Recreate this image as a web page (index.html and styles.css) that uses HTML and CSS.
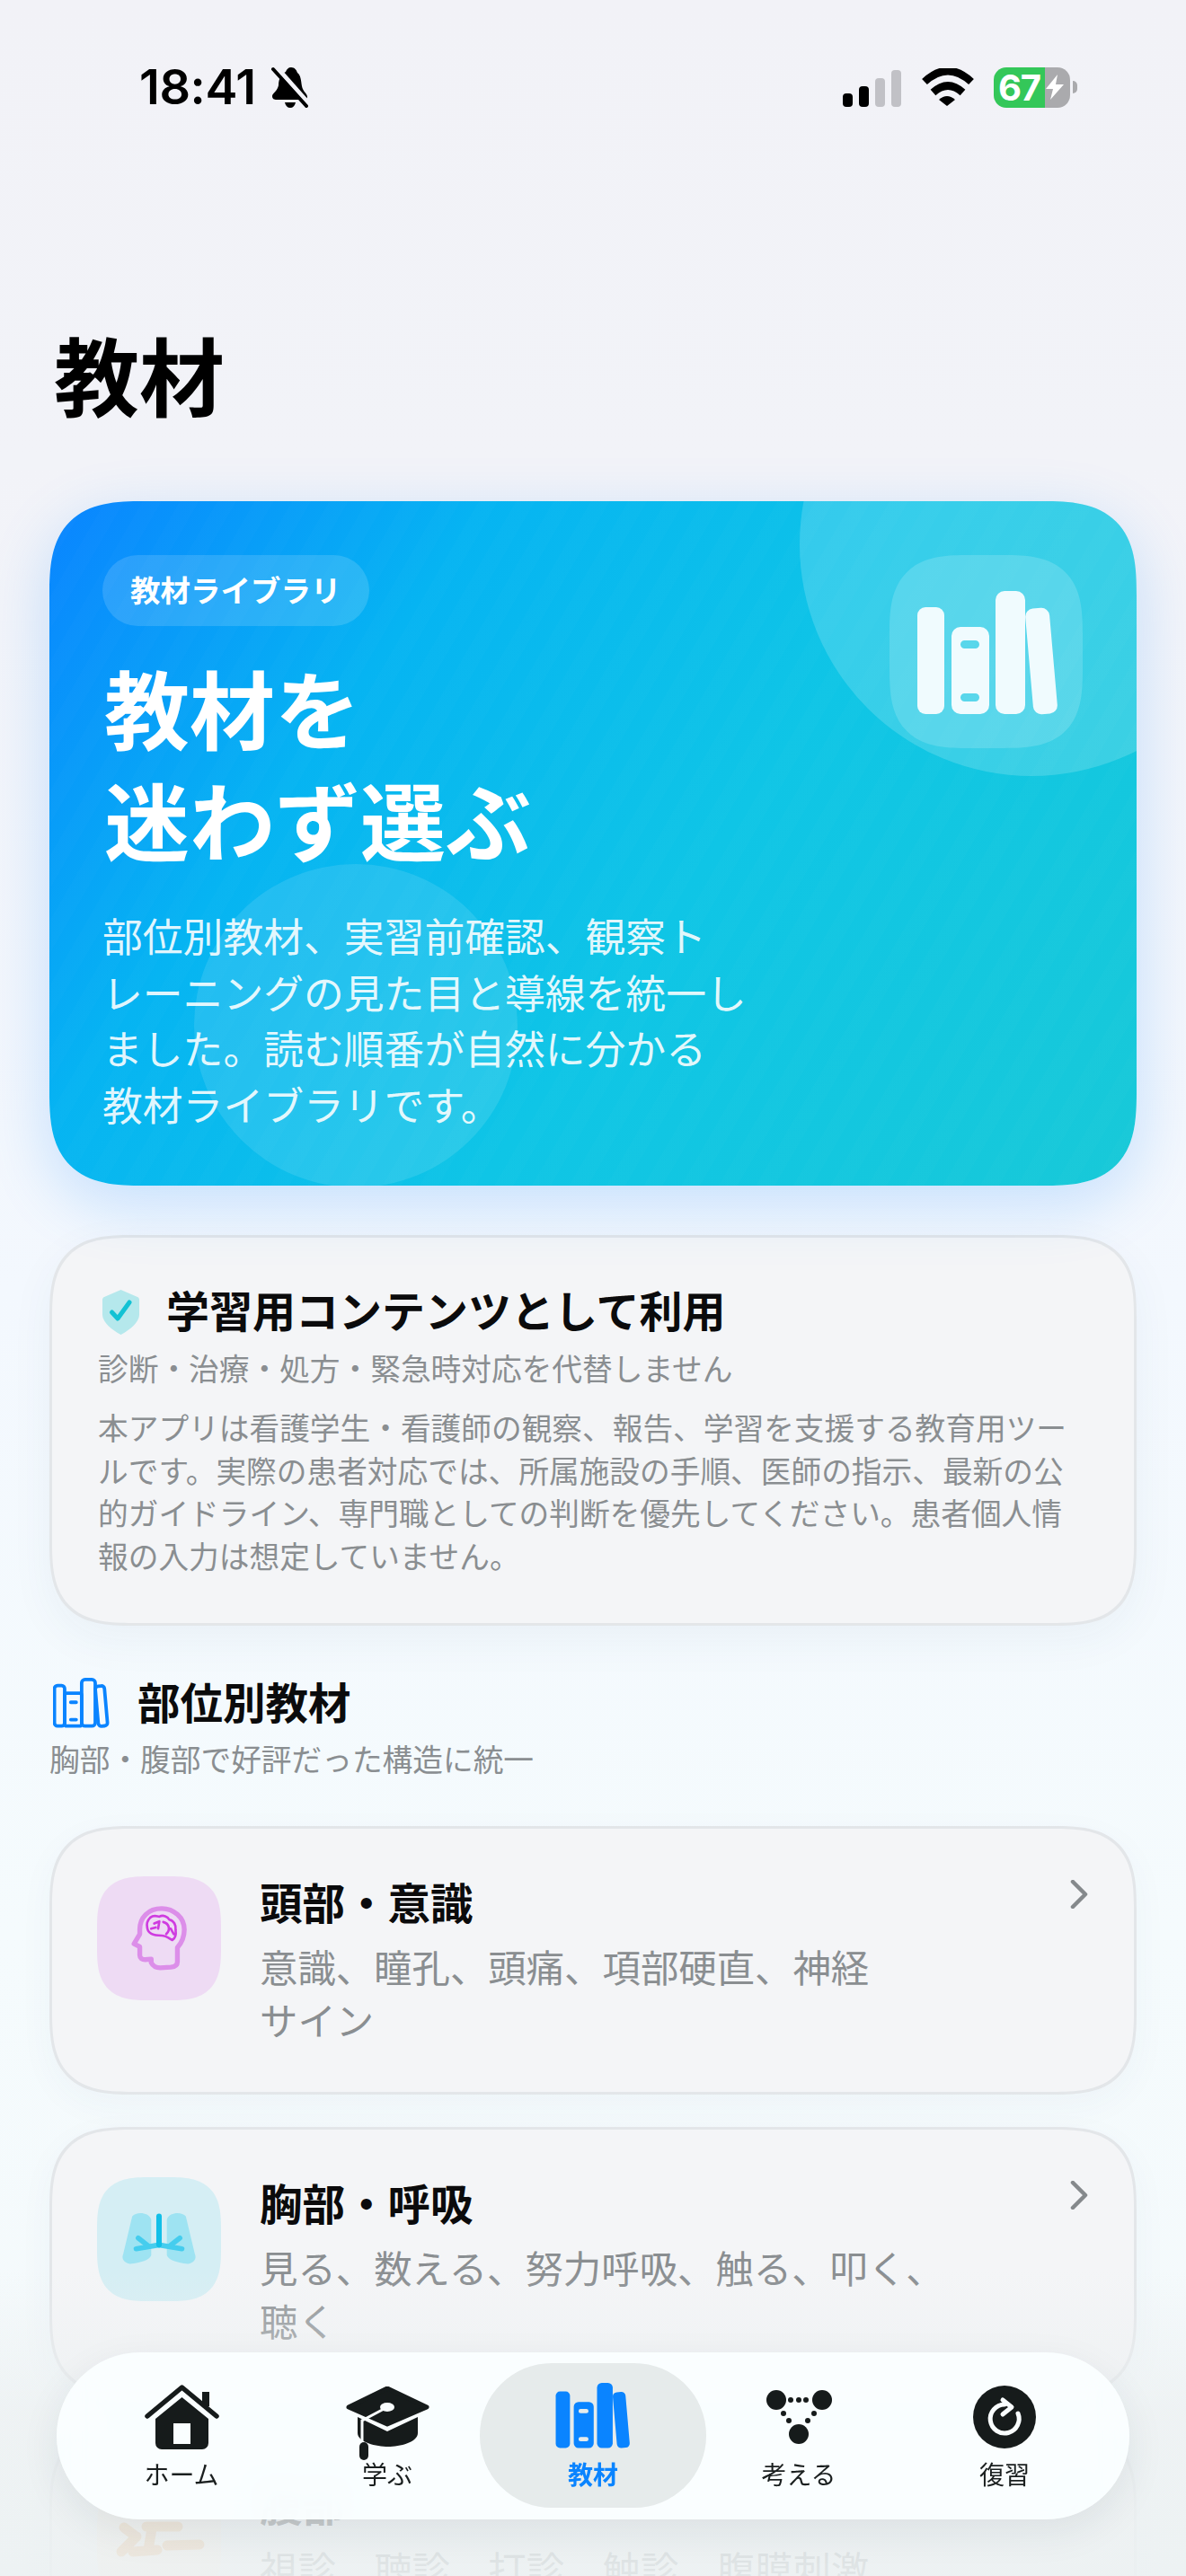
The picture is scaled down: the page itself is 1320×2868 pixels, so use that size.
FILE: index.html
```html
<!DOCTYPE html>
<html lang="ja">
<head>
<meta charset="utf-8">
<title>教材</title>
<link rel="stylesheet" href="styles.css">
</head>
<body>
<svg class="defs" width="0" height="0" aria-hidden="true">
  <symbol id="books" viewBox="29 38 159 140">
    <rect x="30" y="57" width="30" height="119" rx="9"/>
    <path fill-rule="evenodd" d="M78 79H100a10 10 0 0 1 10 10V166a10 10 0 0 1 -10 10H78a10 10 0 0 1 -10 -10V89a10 10 0 0 1 10 -10ZM82.500 94a4.500 4.500 0 0 0 0 9H94.500a4.500 4.500 0 0 0 0 -9ZM82.500 153a4.500 4.500 0 0 0 0 9H94.500a4.500 4.500 0 0 0 0 -9Z"/>
    <rect x="117" y="39" width="33" height="137" rx="10"/>
    <rect x="154.500" y="58" width="27" height="118" rx="9" transform="rotate(-5 168 117)"/>
  </symbol>
</svg>
<div class="screen">
  <header class="status">
    <div class="status-left">
      <span class="time">18:41</span>
      <svg class="bell" viewBox="0 0 41 46">
        <path d="M22 1C26 1 28 4 29 7C33 10 33 16 34 22C35 28 40 30 40 34C40 36 38 37 36 37H6C3 37 1 36 1 33C1 30 7 27 8 21C8 14 11 8 16 6C17 3 19 1 22 1Z"/>
        <path d="M15 40H27C26 44 24 46 21 46C18 46 16 44 15 40Z"/>
        <path class="bell-gap" d="M6 1L44 44"/>
        <path class="bell-slash" d="M2 3L39 44"/>
      </svg>
    </div>
    <div class="status-right">
      <svg class="signal" viewBox="0 0 65 41">
        <rect x="0" y="26" width="11" height="15" rx="4"/>
        <rect x="18" y="18" width="11" height="23" rx="4"/>
        <rect class="signal-off" x="36" y="9" width="11" height="32" rx="4"/>
        <rect class="signal-off" x="54" y="0" width="11" height="41" rx="4"/>
      </svg>
      <svg class="wifi" viewBox="0 0 58 42">
        <path class="wifi-arc" d="M3 15Q29 -9 55 15"/>
        <path class="wifi-arc" d="M12.500 27Q29 12 45.500 27"/>
        <path d="M19 35Q28 27 37 35L28 42Z"/>
      </svg>
      <div class="battery">
        <span class="battery-level">67</span>
        <span class="battery-rest">
          <svg class="bolt" viewBox="0 0 20 28"><path d="M13 0L0 16H8L5 28L20 11H11Z"/></svg>
        </span>
      </div>
      <span class="battery-nub"></span>
    </div>
  </header>

  <main class="content">
    <h1 class="page-title">教材</h1>

    <section class="hero">
      <span class="hero-circle hero-circle-top"></span>
      <span class="hero-circle hero-circle-bottom"></span>
      <div class="hero-text">
        <span class="hero-pill">教材ライブラリ</span>
        <h2 class="hero-title">教材を<br>迷わず選ぶ</h2>
        <p class="hero-desc">部位別教材、実習前確認、観察ト<br>レーニングの見た目と導線を統一し<br>ました。読む順番が自然に分かる<br>教材ライブラリです。</p>
      </div>
      <div class="hero-tile">
        <svg class="hero-books"><use href="#books"/></svg>
      </div>
    </section>

    <section class="notice">
      <div class="notice-head">
        <svg class="shield" viewBox="0 0 41 50">
          <path class="shield-body" d="M20.500 0L39 8C40.500 8.700 41 10 41 11V28C41 36 30 45 20.500 50C11 45 0 36 0 28V11C0 10 .5 8.700 2 8Z"/>
          <path class="shield-check" d="M10.500 25L17 32L30 14"/>
        </svg>
        <h3 class="notice-title">学習用コンテンツとして利用</h3>
      </div>
      <p class="notice-sub">診断・治療・処方・緊急時対応を代替しません</p>
      <p class="notice-body">本アプリは看護学生・看護師の観察、報告、学習を支援する教育用ツー<br>ルです。実際の患者対応では、所属施設の手順、医師の指示、最新の公<br>的ガイドライン、専門職としての判断を優先してください。患者個人情<br>報の入力は想定していません。</p>
    </section>

    <section class="section-head">
      <div class="section-row">
        <svg class="section-icon" viewBox="26 34 166 148">
          <rect x="30" y="57" width="30" height="119" rx="9"/>
          <rect x="60" y="79" width="50" height="97" rx="6"/>
          <path d="M78 106H94M78 157H94"/>
          <rect x="110" y="39" width="40" height="137" rx="10"/>
          <rect x="154.500" y="58" width="27" height="118" rx="9" transform="rotate(-5 168 117)"/>
        </svg>
        <h3 class="section-title">部位別教材</h3>
      </div>
      <p class="section-sub">胸部・腹部で好評だった構造に統一</p>
    </section>

    <article class="card">
      <div class="card-tile tile-purple">
        <svg class="card-icon" viewBox="55 88 412 412">
          <path class="head" d="M322 372V325C340 305 345 285 345 265C345 225 310 195 270 195C225 195 197 225 197 265V280L178 312L197 322V350C197 360 205 365 215 365L235 363V375C240 385 250 392 265 392L300 390C315 388 322 382 322 372Z"/>
          <path class="brain" d="M232 225C245 215 255 222 262 222C275 215 290 222 295 232C310 235 318 250 316 265C318 280 315 295 305 300C295 295 285 285 270 285C250 285 225 280 222 260C218 245 225 232 232 225ZM245 245L262 238L258 262M275 240C295 245 300 265 285 280M300 262L310 280M235 262L250 258"/>
        </svg>
      </div>
      <div class="card-body">
        <h4 class="card-title">頭部・意識</h4>
        <p class="card-desc">意識、瞳孔、頭痛、項部硬直、神経<br>サイン</p>
      </div>
      <svg class="chevron" viewBox="0 0 20 32"><path d="M3 2L17 16L3 30"/></svg>
    </article>

    <article class="card">
      <div class="card-tile tile-cyan">
        <svg class="card-icon" viewBox="55 70 412 412">
          <path class="lung" d="M172 200C185 185 225 185 235 210V330C230 345 200 355 165 358C145 355 135 340 142 325Z"/>
          <path class="lung" d="M350 200C337 185 297 185 287 210V330C292 345 322 355 357 358C377 355 387 340 380 325Z"/>
          <path class="bronchi" d="M192 272L225 298M330 272L297 298M185 308L261 295L337 308"/>
          <path class="trachea" d="M261 200V295"/>
        </svg>
      </div>
      <div class="card-body">
        <h4 class="card-title">胸部・呼吸</h4>
        <p class="card-desc">見る、数える、努力呼吸、触る、叩く、<br>聴く</p>
      </div>
      <svg class="chevron" viewBox="0 0 20 32"><path d="M3 2L17 16L3 30"/></svg>
    </article>

    <article class="card">
      <div class="card-tile tile-orange">
        <svg class="card-icon" viewBox="0 0 138 138">
          <path class="gut" d="M30 55L42 64M27 82L44 65M55 54H90M61 56L57 80M40 82L67 80M78 75L114 74"/>
        </svg>
      </div>
      <div class="card-body">
        <h4 class="card-title">腹部</h4>
        <p class="card-desc">視診、聴診、打診、触診、腹膜刺激</p>
      </div>
      <svg class="chevron" viewBox="0 0 20 32"><path d="M3 2L17 16L3 30"/></svg>
    </article>
  </main>

  <div class="fade"></div>

  <nav class="tabbar">
    <a class="tab">
      <svg class="tab-icon icon-home" viewBox="0 0 83 72">
        <path class="home-body" fill-rule="evenodd" d="M41.500 14L71 38V65a7 7 0 0 1 -7 7H19a7 7 0 0 1 -7 -7V38ZM32 43V66H51V43Z"/>
        <path class="home-roof" d="M3 35L41.500 3L80 35"/>
        <path class="home-chimney" d="M68 8V24"/>
      </svg>
      <span class="tab-label">ホーム</span>
    </a>
    <a class="tab">
      <svg class="tab-icon icon-cap" viewBox="0 0 93 82">
        <path class="cap-bowl" d="M13 34L46 50L80 34V52C80 62 60 67 47 67C34 67 13 62 13 52Z"/>
        <path class="cap-top" d="M46 2L90 23L46 42L3 23Z"/>
        <path class="cap-string" d="M46 23L18 38V62"/>
        <ellipse class="cap-button" cx="46" cy="23" rx="8" ry="5"/>
        <rect class="cap-tassel" x="15" y="62" width="10" height="20" rx="5"/>
      </svg>
      <span class="tab-label">学ぶ</span>
    </a>
    <a class="tab tab-active">
      <svg class="tab-icon icon-books"><use href="#books"/></svg>
      <span class="tab-label">教材</span>
    </a>
    <a class="tab">
      <svg class="tab-icon icon-think" viewBox="0 0 75 60">
        <circle cx="12" cy="11" r="11"/><circle cx="63" cy="11" r="11"/><circle cx="37" cy="49" r="11"/>
        <circle cx="28" cy="11" r="3"/><circle cx="37" cy="11" r="3"/><circle cx="45" cy="11" r="3"/>
        <circle cx="20" cy="26" r="3"/><circle cx="26" cy="34" r="3"/><circle cx="54" cy="26" r="3"/><circle cx="47" cy="34" r="3"/>
      </svg>
      <span class="tab-label">考える</span>
    </a>
    <a class="tab">
      <svg class="tab-icon icon-review" viewBox="0 0 70 70">
        <circle cx="35" cy="35" r="35"/>
        <path class="review-arrow" d="M35 21A16 16 0 1 0 50 31M33 16L43 24L33 32"/>
      </svg>
      <span class="tab-label">復習</span>
    </a>
  </nav>
</div>
</body>
</html>
```
FILE: styles.css
```css
* { box-sizing: border-box; margin: 0; padding: 0; }
html, body { width: 1320px; height: 2868px; overflow: hidden; }
body { font-family: "Noto Sans CJK JP", "Noto Sans", sans-serif; color: #0b0b0c; }
.defs { position: absolute; }

.screen {
  position: relative;
  width: 1320px;
  height: 2868px;
  padding-top: 74px;
  overflow: hidden;
  background: linear-gradient(180deg, #f2f2f7 0, #f2f3f8 18%, #f3f8fe 50%, #f5fbfd 75%, #f4f9fb 100%);
}

/* status bar */
.status { display: flex; justify-content: space-between; align-items: center; height: 46px; padding: 0 121px 0 155px; }
.status-left { display: flex; align-items: center; gap: 17px; }
.time { font: 600 54px/46px Inter, sans-serif; letter-spacing: -.4px; color: #000; }
.bell { width: 41px; height: 46px; fill: #000; }
.bell-gap { fill: none; stroke: #f2f2f7; stroke-width: 5; }
.bell-slash { fill: none; stroke: #000; stroke-width: 4; stroke-linecap: round; }
.status-right { display: flex; align-items: center; }
.signal { width: 65px; height: 41px; fill: #000; margin-top: 3px; margin-right: 23px; }
.signal-off { fill: #c1c1c6; }
.wifi { width: 58px; height: 42px; fill: #000; margin-right: 22px; }
.wifi-arc { fill: none; stroke: #000; stroke-width: 8.500; }
.battery { display: flex; width: 85px; height: 45px; border-radius: 14px; overflow: hidden; }
.battery-level { width: 57px; background: #34c759; color: #fff; font: 700 40px/45px Inter, sans-serif; text-align: center; letter-spacing: -1px; white-space: nowrap; }
.battery-rest { flex: 1; display: flex; align-items: center; background: #aaaaad; }
.bolt { width: 20px; height: 28px; fill: #fff; margin-left: 1px; }
.battery-nub { width: 5px; height: 14px; margin-left: 3px; background: #aaaaad; border-radius: 0 5px 5px 0; }

/* page */
.content { padding: 0 55px; }
.page-title { font-size: 95px; font-weight: 700; line-height: 110px; margin-top: 241px; padding-left: 5px; color: #000; }

/* hero */
.hero {
  position: relative;
  display: flex;
  justify-content: space-between;
  align-items: flex-start;
  height: 762px;
  margin-top: 87px;
  padding: 60px 60px 57px 59px;
  border-radius: 88px;
  overflow: hidden;
  color: #fff;
  box-shadow: 0 20px 70px rgba(10,132,255,.2);
  background:
    repeating-linear-gradient(120deg, rgba(255,255,255,0) 0 18px, rgba(255,255,255,.01) 18px 36px),
    linear-gradient(125deg, #0a84ff 0%, #06b4f2 28%, #0fc5e6 58%, #18c9d8 100%);
}
.hero-circle { position: absolute; border-radius: 50%; }
.hero-circle-top { width: 516px; height: 516px; left: 835px; top: -210px; background: rgba(255,255,255,.17); }
.hero-circle-bottom { width: 360px; height: 360px; left: 161px; top: 404px; background: rgba(255,255,255,.11); }
.hero-text { position: relative; }
.hero-pill { display: inline-block; height: 79px; padding: 0 31px; border-radius: 40px; background: rgba(255,255,255,.14); font-size: 33.500px; font-weight: 700; line-height: 75px; }
.hero-title { font-size: 95px; font-weight: 700; line-height: 124px; margin-top: 28px; margin-left: 2px; }
.hero-desc { font-size: 44.800px; line-height: 62.600px; margin-top: 37px; white-space: nowrap; color: rgba(255,255,255,.9); }
.hero-tile { position: relative; width: 215px; height: 215px; display: flex; align-items: center; justify-content: center; border-radius: 72px; background: rgba(255,255,255,.16); }
.hero-books { width: 159px; height: 140px; fill: #f0fbfe; margin-top: 2px; margin-left: 3px; }

/* notice */
.notice { margin-top: 55px; height: 435px; padding: 52px 51px 0; background: #f4f5f7; border: 3px solid #e3e6e9; border-radius: 76px; box-shadow: 0 16px 50px rgba(40,80,120,.05); }
.notice-head { display: flex; align-items: center; height: 60px; padding-left: 5px; }
.shield { width: 41px; height: 50px; margin-right: 30px; margin-top: 2px; }
.shield-body { fill: #b5e8ec; }
.shield-check { fill: none; stroke: #12c2d4; stroke-width: 5; stroke-linecap: round; stroke-linejoin: round; }
.notice-title { font-size: 48px; font-weight: 700; line-height: 54px; padding-bottom: 6px; }
.notice-sub { font-size: 33.700px; line-height: 45px; margin-top: 10px; color: #8a8e91; }
.notice-body { font-size: 33.700px; line-height: 47.600px; margin-top: 20px; color: #8a8e91; white-space: nowrap; }

/* section header */
.section-head { margin-top: 56px; }
.section-row { display: flex; align-items: center; height: 60px; padding-left: 4px; }
.section-icon { width: 63px; height: 56px; margin-right: 31px; fill: none; stroke: #0a84ff; stroke-width: 10; stroke-linecap: round; }
.section-title { font-size: 47.500px; font-weight: 700; line-height: 56px; padding-bottom: 4px; }
.section-sub { font-size: 33.700px; line-height: 44px; margin-top: 10px; padding-bottom: 2px; color: #8a8e91; }

/* cards */
.card { display: flex; align-items: flex-start; height: 299px; margin-top: 36px; padding: 53px 51px 0 50px; background: #f4f5f7; border: 3px solid #e3e6e9; border-radius: 76px; box-shadow: 0 12px 40px rgba(40,80,120,.04); }
.section-head + .card { margin-top: 51px; }
.card-tile { flex: none; width: 138px; height: 138px; display: flex; align-items: center; justify-content: center; border-radius: 46px; }
.tile-purple { background: #eedbf4; }
.tile-cyan { background: #d5eef4; }
.tile-orange { background: #fbeee2; }
.card-icon { width: 138px; height: 138px; }
.head { fill: none; stroke: #dc8ee9; stroke-width: 16; stroke-linejoin: round; }
.brain { fill: none; stroke: #cf3ce0; stroke-width: 8; stroke-linejoin: round; stroke-linecap: round; }
.lung { fill: #9ee3f2; }
.bronchi { fill: none; stroke: #45cdee; stroke-width: 17; stroke-linecap: round; stroke-linejoin: round; }
.trachea { fill: none; stroke: #12bfe8; stroke-width: 18; stroke-linecap: round; }
.gut { fill: none; stroke: #f0ad6a; stroke-width: 11; stroke-linecap: round; }
.card-body { flex: 1; margin-left: 43px; }
.card-title { font-size: 47.500px; font-weight: 700; line-height: 56px; padding-bottom: 4px; }
.card-desc { font-size: 42.400px; line-height: 59px; margin-top: 10px; color: #8a8e91; white-space: nowrap; }
.chevron { flex: none; width: 20px; height: 32px; margin-top: 4px; fill: none; stroke: #85898c; stroke-width: 4.500; stroke-linecap: round; stroke-linejoin: round; }

/* bottom fade + tab bar (overlay the scrolled content) */
.fade { position: absolute; left: 0; right: 0; bottom: 0; height: 340px; background: linear-gradient(180deg, rgba(236,240,241,0) 0%, rgba(236,240,241,.72) 45%, rgba(236,241,242,.88) 100%); pointer-events: none; }
.tabbar { position: absolute; left: 63px; top: 2619px; width: 1194px; height: 186px; display: grid; grid-template-columns: repeat(5, 229px); justify-content: center; align-items: stretch; border-radius: 93px; background: rgba(250,254,255,.95); backdrop-filter: blur(14px); box-shadow: 0 14px 44px rgba(30,50,60,.08); }
.tab { position: relative; display: flex; flex-direction: column; align-items: center; justify-content: flex-end; padding-bottom: 31px; color: #1a1f1f; }
.tab-active { color: #0a84ff; font-weight: 700; }
.tab-active::before { content: ""; position: absolute; left: -12px; right: -11px; top: 12px; height: 161px; border-radius: 80px; background: #e6ebeb; }
.tab-icon { position: absolute; fill: #161b1b; }
.tab-label { position: relative; font-size: 28px; line-height: 40px; }
.icon-home { width: 83px; height: 72px; top: 36px; }
.home-body { fill: #161b1b; }
.home-roof { fill: none; stroke: #161b1b; stroke-width: 5.500; stroke-linecap: round; stroke-linejoin: round; }
.home-chimney { fill: none; stroke: #161b1b; stroke-width: 8; }
.icon-cap { width: 93px; height: 82px; top: 38px; }
.cap-top { fill: #161b1b; stroke: #161b1b; stroke-width: 5; stroke-linejoin: round; }
.cap-bowl { fill: #161b1b; }
.cap-string { fill: none; stroke: #f9fdfe; stroke-width: 3; }
.cap-button { fill: #f9fdfe; }
.icon-books { width: 84px; height: 75px; top: 33px; left: 72.500px; fill: #0a84ff; }
.icon-think { width: 75px; height: 60px; top: 42px; }
.icon-review { width: 70px; height: 70px; top: 37px; }
.review-arrow { fill: none; stroke: #f9fdfe; stroke-width: 5; stroke-linecap: round; stroke-linejoin: round; }

/* iOS continuous corners where the engine can draw them */
@supports (corner-shape: squircle) {
  .hero, .hero-tile, .notice, .card, .card-tile { corner-shape: superellipse(1.5); }
  .hero { border-radius: 105px; }
  .hero-tile { border-radius: 88px; }
  .notice, .card { border-radius: 92px; }
  .card-tile { border-radius: 58px; }
}
```
